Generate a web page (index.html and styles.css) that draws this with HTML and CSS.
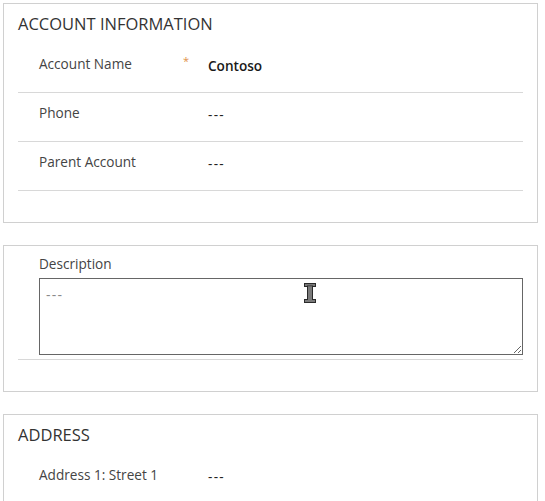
FILE: index.html
```html
<!DOCTYPE html>
<html lang="en">
<head>
    <meta charset="UTF-8">
    <title>Account</title>
    <link rel="stylesheet" href="styles.css">
</head>
<body>

    <!-- Account information -->
    <section class="card">
        <h2 class="card-title">ACCOUNT INFORMATION</h2>
        <div class="field-row">
            <span class="field-label">Account Name</span>
            <span class="required">*</span>
            <span class="field-value strong">Contoso</span>
        </div>
        <div class="field-row">
            <span class="field-label">Phone</span>
            <span class="required"></span>
            <span class="field-value dashes">---</span>
        </div>
        <div class="field-row">
            <span class="field-label">Parent Account</span>
            <span class="required"></span>
            <span class="field-value dashes">---</span>
        </div>
    </section>

    <!-- Description -->
    <section class="card card-plain">
        <div class="field-stack">
            <label class="stack-label" for="desc">Description</label>
            <textarea id="desc" class="desc-box" placeholder="---"></textarea>
            <svg class="ibeam" width="12" height="20" viewBox="0 0 12 20">
                <rect x="0.5" y="0.5" width="11" height="3" fill="#7a7a7a" stroke="#2a2a2a"/>
                <rect x="3.5" y="3" width="5" height="14" fill="#7a7a7a" stroke="#2a2a2a"/>
                <rect x="0.5" y="16.5" width="11" height="3" fill="#7a7a7a" stroke="#2a2a2a"/>
                <rect x="4" y="3.5" width="4" height="13.5" fill="#7a7a7a"/>
            </svg>
        </div>
    </section>

    <!-- Address -->
    <section class="card">
        <h2 class="card-title">ADDRESS</h2>
        <div class="field-row">
            <span class="field-label">Address 1: Street 1</span>
            <span class="required"></span>
            <span class="field-value dashes">---</span>
        </div>
    </section>

</body>
</html>
```

FILE: styles.css
```css
body {
    margin: 0;
    padding: 3px;
    font-family: "Segoe UI", "Open Sans", sans-serif;
    font-size: 14px;
    color: #333;
    background: #fff;
}
.card {
    width: 535px;
    box-sizing: border-box;
    border: 1px solid #d0d0d0;
    padding: 0 14px 31px;
    margin-bottom: 22px;
}
.card-title {
    margin: 0;
    padding: 8px 0 8px;
    font-size: 16.5px;
    font-weight: 400;
    line-height: 24px;
    color: #333;
}
/* Rows */
.field-row {
    display: flex;
    align-items: flex-start;
    height: 49px;
    box-sizing: border-box;
    padding: 10px 0 0 21px;
    border-bottom: 1px solid #d8d8d8;
    font-size: 13.6px;
    line-height: 20px;
}
.field-label {
    width: 144px;
    flex-shrink: 0;
    color: #444;
}
.required {
    width: 25px;
    flex-shrink: 0;
    margin-top: -3px;
    color: #e0914a;
    font-size: 11px;
}
.field-value {
    margin-top: 2px;
    color: #222;
}
.field-value.strong {
    font-weight: 600;
    color: #1a1a1a;
}
.field-value.dashes {
    letter-spacing: 1.3px;
}
/* Description */
.field-stack {
    position: relative;
    padding: 8px 0 4px 21px;
    border-bottom: 1px solid #d8d8d8;
}
.stack-label {
    display: block;
    font-size: 13.6px;
    line-height: 20px;
    margin-bottom: 4px;
    color: #444;
}
.desc-box {
    display: block;
    width: 100%;
    height: 77px;
    box-sizing: border-box;
    margin: 0;
    padding: 6px 6px;
    border: 1px solid #666;
    border-radius: 0;
    font-family: inherit;
    font-size: 14px;
    line-height: 20px;
    color: #333;
    outline: none;
}
.desc-box::placeholder {
    color: #8a8a8a;
    letter-spacing: 1.3px;
}
.ibeam {
    position: absolute;
    left: 286px;
    top: 37px;
}
```
